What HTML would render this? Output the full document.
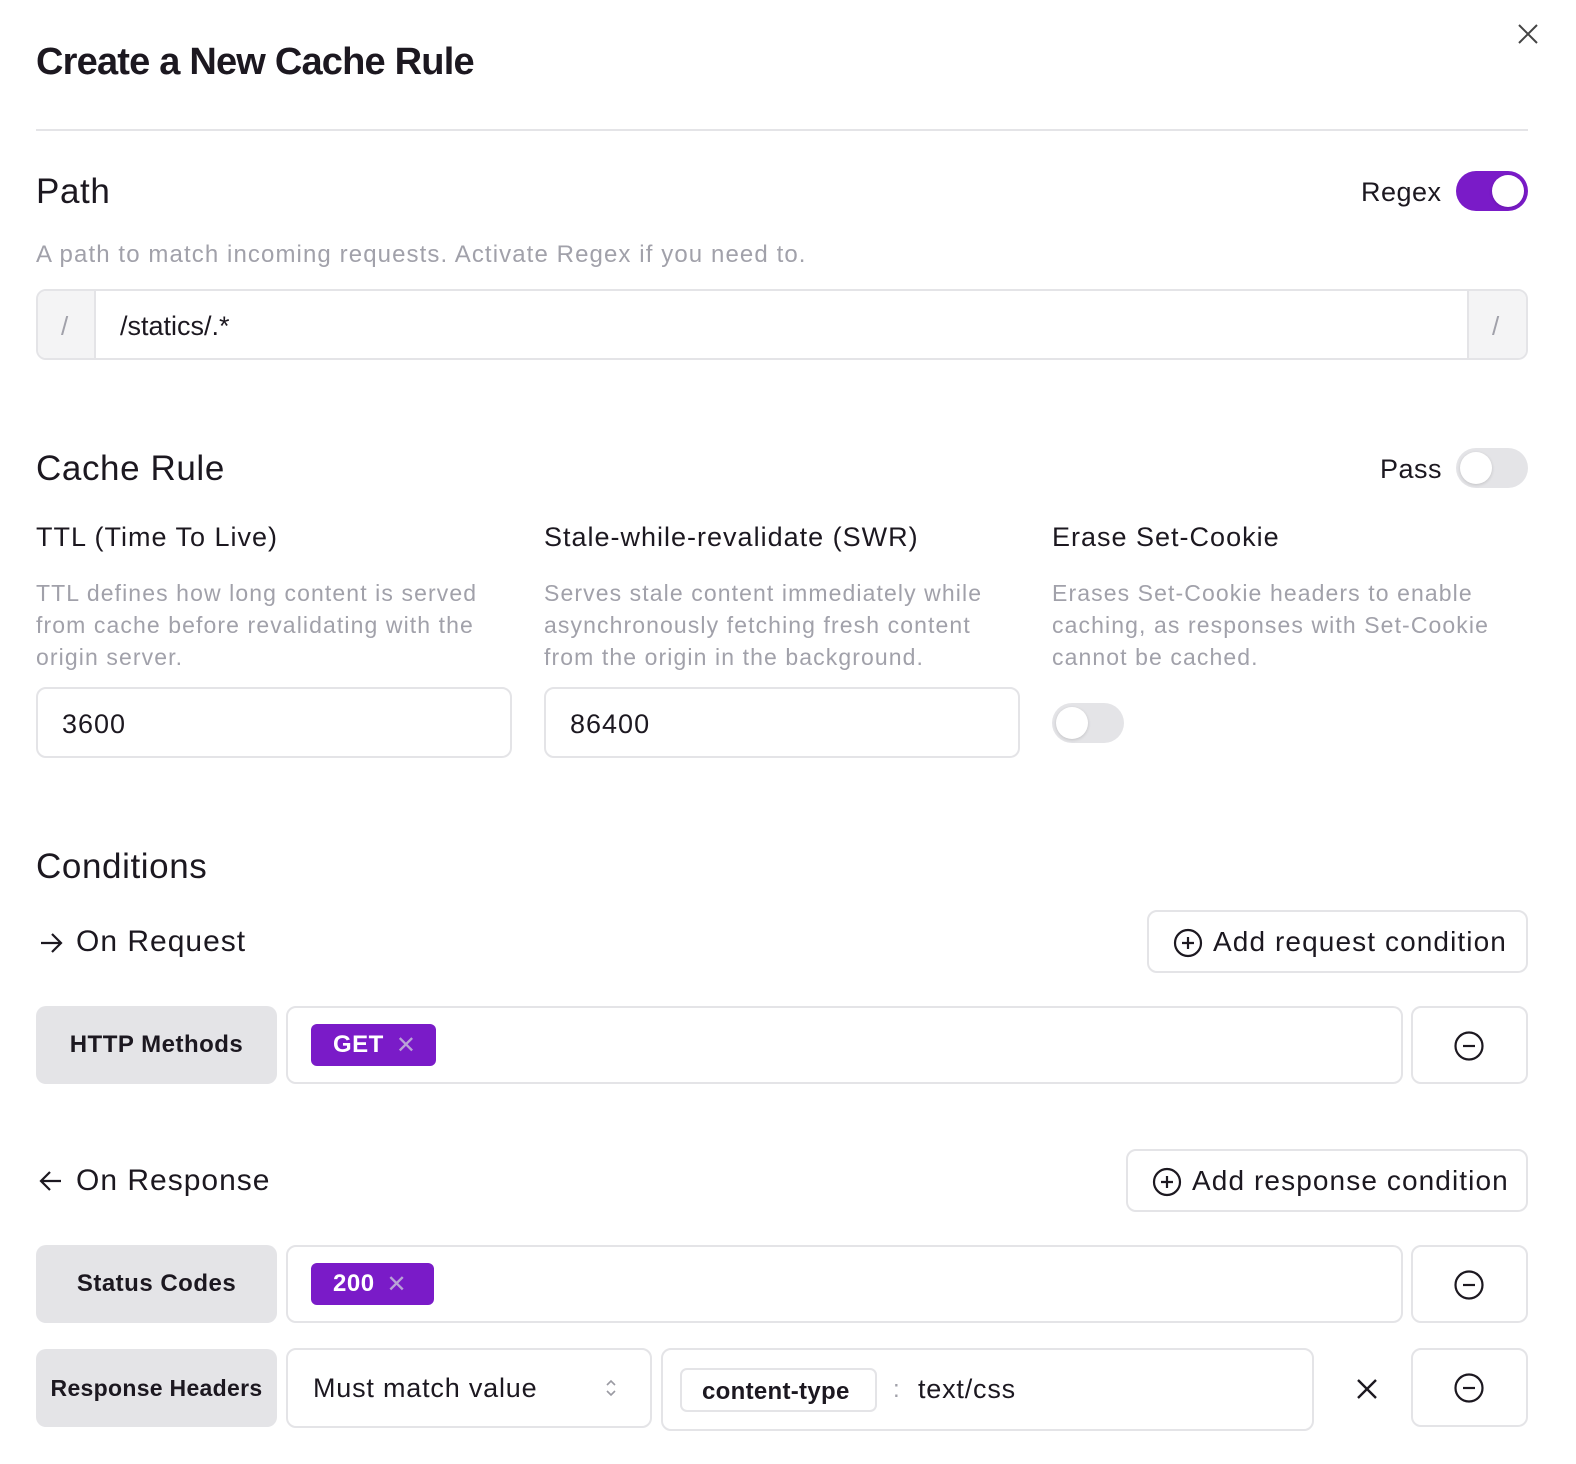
<!DOCTYPE html>
<html style="overflow:hidden"><head><meta charset="utf-8"><style>
*{box-sizing:border-box;margin:0;padding:0}
body{width:1576px;height:1464px;background:#fff;font-family:"Liberation Sans",sans-serif;color:#1c1820;position:relative;overflow:hidden}
.a{position:absolute;white-space:nowrap}
.box{position:absolute;border:2px solid #e4e4e7;border-radius:10px;background:#fff}
.gray{color:#a1a1aa}
.tog{position:absolute;width:72px;height:40px;border-radius:20px;background:#e4e4e7}
.tog i{position:absolute;top:4px;left:4px;width:32px;height:32px;border-radius:50%;background:#fff;box-shadow:0 1px 3px rgba(0,0,0,.15)}
.lbl{position:absolute;background:#e4e4e7;border-radius:10px;font-weight:bold;font-size:24px;letter-spacing:.5px;display:flex;align-items:center;justify-content:center}
.chip{position:absolute;background:#7a1bc8;color:#fff;border-radius:6px;font-size:24px;font-weight:bold;display:flex;align-items:center;padding-left:22px;letter-spacing:.5px}
.chip span{color:#b9a3d6;font-weight:normal;margin-left:12px;font-size:24px}
.desc{font-size:23px;line-height:32px;color:#a1a1aa;letter-spacing:1.1px}
.h2{font-size:35px;letter-spacing:.6px}
</style></head><body>
<div class="a" style="left:36px;top:41px;font-size:38px;font-weight:bold;letter-spacing:-.8px">Create a New Cache Rule</div>
<svg class="a" style="left:1516px;top:22px" width="24" height="24" viewBox="0 0 24 24"><path d="M3 3L21 21M21 3L3 21" stroke="#444" stroke-width="2"/></svg>
<div class="a" style="left:36px;top:129px;width:1492px;height:2px;background:#e4e4e7"></div>

<div class="a h2" style="left:36px;top:172px">Path</div>
<div class="a" style="left:1361px;top:177px;font-size:27px;letter-spacing:.5px">Regex</div>
<div class="tog" style="left:1456px;top:171px;background:#7a1bc8"><i style="left:36px"></i></div>
<div class="a gray" style="left:36px;top:241px;font-size:24px;letter-spacing:1.1px">A path to match incoming requests. Activate Regex if you need to.</div>
<div class="box" style="left:36px;top:289px;width:1492px;height:71px;overflow:hidden">
 <div class="a" style="left:0;top:0;width:58px;height:67px;background:#f4f4f5;border-right:2px solid #e4e4e7"></div>
 <div class="a gray" style="left:23px;top:20px;font-size:26px">/</div>
 <div class="a" style="left:82px;top:20px;font-size:27px">/statics/.*</div>
 <div class="a" style="right:0;top:0;width:59px;height:67px;background:#f4f4f5;border-left:2px solid #e4e4e7"></div>
 <div class="a gray" style="left:1454px;top:20px;font-size:26px">/</div>
</div>

<div class="a h2" style="left:36px;top:449px">Cache Rule</div>
<div class="a" style="left:1380px;top:454px;font-size:27px;letter-spacing:.5px">Pass</div>
<div class="tog" style="left:1456px;top:448px"><i></i></div>

<div class="a" style="left:36px;top:522px;font-size:27px;letter-spacing:1px">TTL (Time To Live)</div>
<div class="a" style="left:544px;top:522px;font-size:27px;letter-spacing:1px">Stale-while-revalidate (SWR)</div>
<div class="a" style="left:1052px;top:522px;font-size:27px;letter-spacing:1px">Erase Set-Cookie</div>
<div class="a desc" style="left:36px;top:577px">TTL defines how long content is served<br>from cache before revalidating with the<br>origin server.</div>
<div class="a desc" style="left:544px;top:577px">Serves stale content immediately while<br>asynchronously fetching fresh content<br>from the origin in the background.</div>
<div class="a desc" style="left:1052px;top:577px">Erases Set-Cookie headers to enable<br>caching, as responses with Set-Cookie<br>cannot be cached.</div>
<div class="box" style="left:36px;top:687px;width:476px;height:71px"><div class="a" style="left:24px;top:20px;font-size:27px;letter-spacing:1px">3600</div></div>
<div class="box" style="left:544px;top:687px;width:476px;height:71px"><div class="a" style="left:24px;top:20px;font-size:27px;letter-spacing:1px">86400</div></div>
<div class="tog" style="left:1052px;top:703px"><i></i></div>

<div class="a h2" style="left:36px;top:847px">Conditions</div>

<svg class="a" style="left:38px;top:930px" width="26" height="26" viewBox="0 0 26 26"><path d="M3 13H23M14 4L23 13L14 22" fill="none" stroke="#1c1820" stroke-width="2.2"/></svg>
<div class="a" style="left:76px;top:925px;font-size:30px;letter-spacing:1px">On Request</div>
<div class="box" style="left:1147px;top:910px;width:381px;height:63px">
 <svg class="a" style="left:24px;top:16px" width="30" height="30" viewBox="0 0 30 30"><circle cx="15" cy="15" r="13" fill="none" stroke="#1c1820" stroke-width="2.2"/><path d="M15 9V21M9 15H21" stroke="#1c1820" stroke-width="2.2"/></svg>
 <div class="a" style="left:64px;top:14px;font-size:28px;letter-spacing:1.1px">Add request condition</div>
</div>
<div class="lbl" style="left:36px;top:1006px;width:241px;height:78px">HTTP Methods</div>
<div class="box" style="left:286px;top:1006px;width:1117px;height:78px"></div>
<div class="chip" style="left:311px;top:1024px;width:125px;height:42px">GET<span>✕</span></div>
<div class="box" style="left:1411px;top:1006px;width:117px;height:78px"><svg class="a" style="left:40px;top:22px" width="32" height="32" viewBox="0 0 32 32"><circle cx="16" cy="16" r="13.5" fill="none" stroke="#1c1820" stroke-width="2.2"/><path d="M10 16H22" stroke="#1c1820" stroke-width="2.2"/></svg></div>

<svg class="a" style="left:38px;top:1168px" width="26" height="26" viewBox="0 0 26 26"><path d="M23 13H3M12 4L3 13L12 22" fill="none" stroke="#1c1820" stroke-width="2.2"/></svg>
<div class="a" style="left:76px;top:1164px;font-size:30px;letter-spacing:1px">On Response</div>
<div class="box" style="left:1126px;top:1149px;width:402px;height:63px">
 <svg class="a" style="left:24px;top:16px" width="30" height="30" viewBox="0 0 30 30"><circle cx="15" cy="15" r="13" fill="none" stroke="#1c1820" stroke-width="2.2"/><path d="M15 9V21M9 15H21" stroke="#1c1820" stroke-width="2.2"/></svg>
 <div class="a" style="left:64px;top:14px;font-size:28px;letter-spacing:1.1px">Add response condition</div>
</div>
<div class="lbl" style="left:36px;top:1245px;width:241px;height:78px">Status Codes</div>
<div class="box" style="left:286px;top:1245px;width:1117px;height:78px"></div>
<div class="chip" style="left:311px;top:1263px;width:123px;height:42px">200<span>✕</span></div>
<div class="box" style="left:1411px;top:1245px;width:117px;height:78px"><svg class="a" style="left:40px;top:22px" width="32" height="32" viewBox="0 0 32 32"><circle cx="16" cy="16" r="13.5" fill="none" stroke="#1c1820" stroke-width="2.2"/><path d="M10 16H22" stroke="#1c1820" stroke-width="2.2"/></svg></div>

<div class="lbl" style="left:36px;top:1349px;width:241px;height:78px;font-size:23px;letter-spacing:.3px">Response Headers</div>
<div class="box" style="left:286px;top:1348px;width:366px;height:80px">
 <div class="a" style="left:25px;top:23px;font-size:27px;letter-spacing:.8px">Must match value</div>
 <svg class="a" style="left:316px;top:26px" width="14" height="24" viewBox="0 0 14 24"><path d="M3 9L7 5L11 9M3 15L7 19L11 15" fill="none" stroke="#9a9aa2" stroke-width="1.6"/></svg>
</div>
<div class="box" style="left:661px;top:1348px;width:653px;height:83px">
 <div class="box" style="left:17px;top:18px;width:197px;height:44px;border-radius:7px"><div class="a" style="left:20px;top:8px;font-size:24px;font-weight:bold;letter-spacing:.3px">content-type</div></div>
 <div class="a gray" style="left:230px;top:26px;font-size:24px">:</div>
 <div class="a" style="left:255px;top:24px;font-size:27px;letter-spacing:.8px">text/css</div>
</div>
<svg class="a" style="left:1356px;top:1378px" width="22" height="22" viewBox="0 0 22 22"><path d="M2 2L20 20M20 2L2 20" stroke="#1c1820" stroke-width="2.4"/></svg>
<div class="box" style="left:1411px;top:1348px;width:117px;height:79px"><svg class="a" style="left:40px;top:22px" width="32" height="32" viewBox="0 0 32 32"><circle cx="16" cy="16" r="13.5" fill="none" stroke="#1c1820" stroke-width="2.2"/><path d="M10 16H22" stroke="#1c1820" stroke-width="2.2"/></svg></div>
</body></html>
